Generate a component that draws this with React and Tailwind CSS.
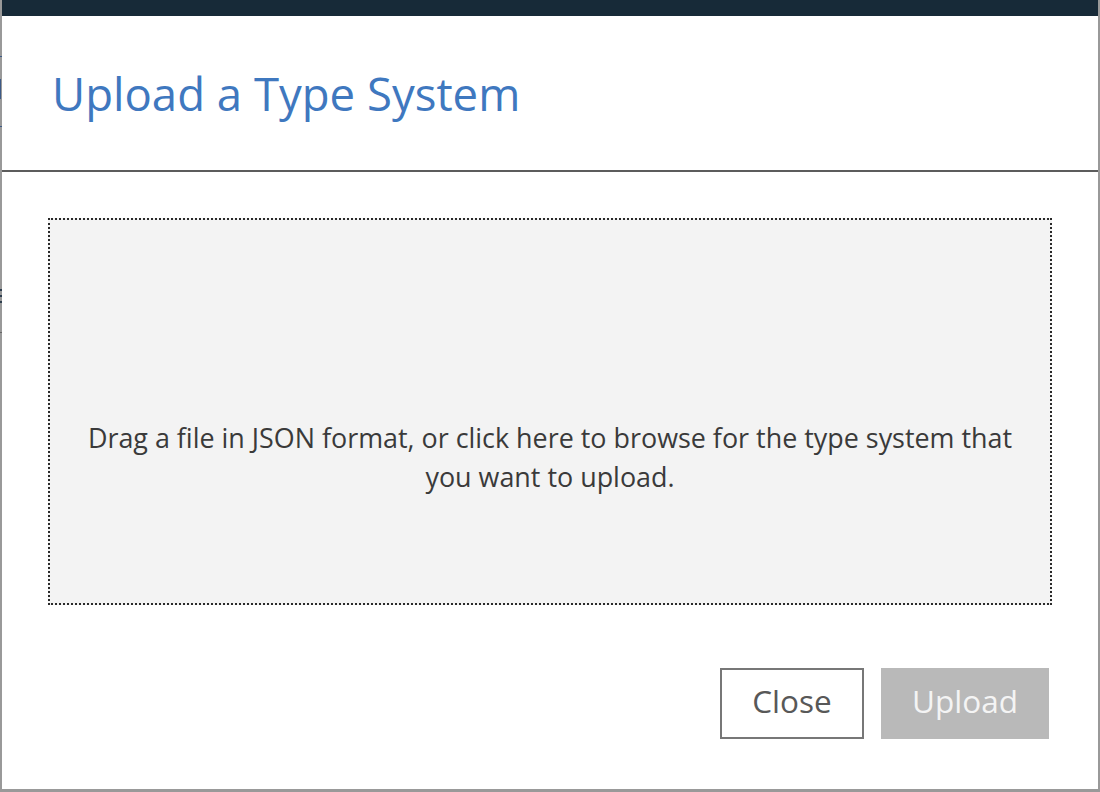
import React from "react";

const font = { fontFamily: '"Open Sans", "Noto Sans", sans-serif' };

const App = () => {
  return (
    <div
      className="relative w-[1100px] h-[792px] bg-[#999999] pl-[2px] pr-[2px] pb-[3px] flex flex-col overflow-hidden"
      style={font}
    >
      {/* bits of the page behind the overlay */}
      <div className="absolute left-0 top-[56px] w-[2px] h-[1px] bg-[#3d5a86]" />
      <div className="absolute left-0 top-[79px] w-[1px] h-[20px] bg-[#3d5a86]" />
      <div className="absolute left-0 top-[126px] w-[2px] h-[1px] bg-[#3d5a86]" />
      <div className="absolute left-0 top-[289px] w-[2px] h-[2px] bg-[#2e3e4e]" />
      <div className="absolute left-0 top-[295px] w-[2px] h-[2px] bg-[#2e3e4e]" />
      <div className="absolute left-0 top-[301px] w-[2px] h-[2px] bg-[#2e3e4e]" />
      <div className="absolute left-0 top-[332px] w-[2px] h-[1px] bg-[#666666]" />

      <div className="h-[16px] bg-[#172a38] shrink-0" />

      <div className="flex-1 bg-white flex flex-col">
        <div className="h-[156px] flex items-center px-[50px] border-b-2 border-[#5c5c5c]">
          <h1 className="text-[45.5px] leading-none text-[#3f78bf] mt-[1px]">
            Upload a Type System
          </h1>
        </div>

        <div className="px-[46px] pt-[46px]">
          <div className="h-[387px] bg-[#f3f3f3] border-2 border-dotted border-[#2a2a2a] flex items-center justify-center px-[24px]">
            <p className="text-center text-[26.9px] leading-[39px] text-[#3a3a3a] mt-[90px]">
              Drag a file in JSON format, or click here to browse for the type system that
              you want to upload.
            </p>
          </div>
        </div>

        <div className="flex justify-end gap-[17px] pr-[49px] pt-[63px]">
          <button className="w-[144px] h-[71px] border-2 border-[#777777] bg-white text-[#585858] text-[31.5px] leading-none pb-[6px]">
            Close
          </button>
          <button className="w-[168px] h-[71px] bg-[#b9b9b9] text-[#f4f4f4] text-[31.5px] leading-none pb-[6px]">
            Upload
          </button>
        </div>
      </div>
    </div>
  );
};

export default App;
